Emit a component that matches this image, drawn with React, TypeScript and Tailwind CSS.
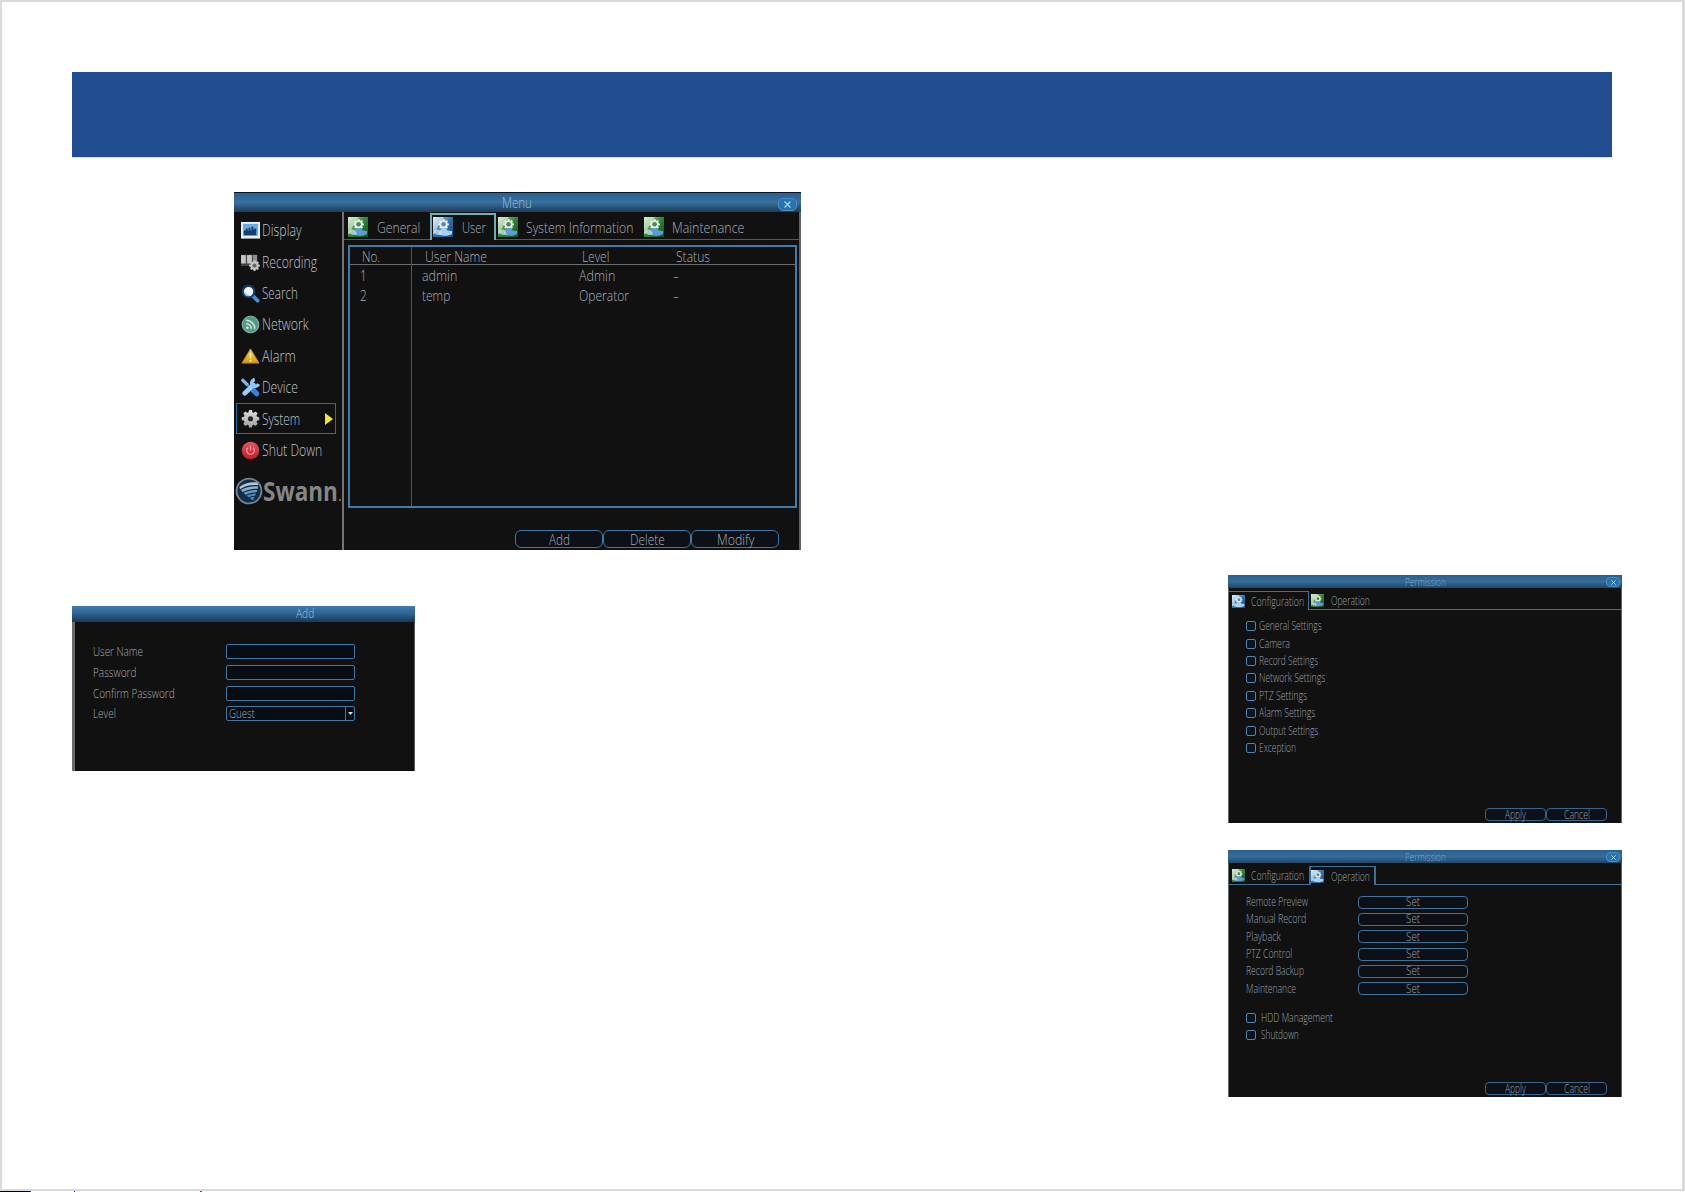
import { useLayoutEffect, useRef, useState } from "react";
import type { ReactNode } from "react";
import clsx from "clsx";

// Squeezes a line of text horizontally so it fills exactly `w` pixels.
const Label = ({
  children,
  className,
  w,
}: Readonly<{ children: string; className?: string; w: number }>) => {
  const ref = useRef<HTMLSpanElement>(null);
  const [scale, setScale] = useState(1);

  useLayoutEffect(() => {
    if (ref.current) {
      setScale(w / ref.current.offsetWidth);
    }
  }, [w]);

  return (
    <span
      className={clsx("inline-block shrink-0 whitespace-nowrap", className)}
      style={{ width: w }}
    >
      <span
        className="inline-block origin-left"
        ref={ref}
        style={{ transform: `scaleX(${scale})` }}
      >
        {children}
      </span>
    </span>
  );
};

const gearPath =
  "M8.400 1h3.200l.4 2.300 1.500.6 1.900-1.300 2.200 2.200-1.300 1.900.6 1.500 2.300.4v3.200l-2.300.4-.6 1.500 1.300 1.900-2.200 2.200-1.900-1.300-1.500.6-.4 2.300H8.400L8 17.100l-1.500-.6-1.900 1.300-2.200-2.200 1.300-1.900-.6-1.500L.8 11.800V8.600l2.300-.4.6-1.500-1.300-1.900 2.200-2.200 1.900 1.300L8 3.300z";

const TabIcon = ({
  active,
  className,
}: Readonly<{ active?: boolean; className: string }>) => (
  <svg
    className={clsx("shrink-0", className)}
    viewBox="0 0 20 20"
  >
    <defs>
      <linearGradient
        id={active ? "tab-on" : "tab-off"}
        x1="0"
        x2="1"
        y1="0"
        y2="1"
      >
        <stop
          offset="0"
          stopColor={active ? "#b3d9f4" : "#a9dfa0"}
        />
        <stop
          offset=".5"
          stopColor={active ? "#2f74b2" : "#2f8439"}
        />
        <stop
          offset="1"
          stopColor={active ? "#1a4880" : "#0f5416"}
        />
      </linearGradient>
    </defs>
    <rect
      fill={active ? "url(#tab-on)" : "url(#tab-off)"}
      height="20"
      width="20"
    />
    <path
      d="M0 0h11L5 9l-3 8H0z"
      fill="#fff"
      opacity=".5"
    />
    <path
      d={gearPath}
      fill="#e6ece2"
      transform="translate(4.800 1.500) scale(.58)"
    />
    <circle
      cx="10.600"
      cy="7.300"
      fill={active ? "#5c86b0" : "#5a7f60"}
      r="2.300"
    />
    <path
      d="M6 17.500c-.5-3.500 2-6.500 5-6.500 2 0 3 1 3.500 2.500l4.500.5v3c-3 2-8.500 2.500-13 .5z"
      fill={active ? "#a5d2f3" : "#5b9bd8"}
    />
    <path
      d="M1 15c2-2.500 4-3 6-2l2 4.500-5 .5z"
      fill="#d7e8ee"
      opacity=".7"
    />
  </svg>
);

const DisplayIcon = () => (
  <svg viewBox="0 0 20 20">
    <rect
      fill="#e4f1fb"
      height="17.500"
      width="20"
      y="1"
    />
    <rect
      fill="#6cabe0"
      height="12.500"
      width="16"
      x="2"
      y="3"
    />
    <path
      d="M3 15v-5h2V8h2v2h1V7h2v3h1V6h2v3h1V8h2v7z"
      fill="#143f70"
    />
  </svg>
);

const RecordingIcon = () => (
  <svg viewBox="0 0 20 20">
    <path
      d="M0 3h17v9H0z"
      fill="#8f8f8f"
    />
    <path
      d="M0 3.500h5V12H0zM6.500 3.500h5V12h-5z"
      fill="#c4c4c4"
    />
    <path
      d="M5.700 3v9M12 3v9"
      stroke="#3c3c3c"
    />
    <path
      d="M0 13h10v1.500H0z"
      fill="#5a5a5a"
    />
    <path
      d={gearPath}
      fill="#c4c4c4"
      transform="translate(8 8) scale(.62)"
    />
    <circle
      cx="14.200"
      cy="14.300"
      fill="#666"
      r="2.200"
    />
  </svg>
);

const SearchIcon = () => (
  <svg viewBox="0 0 20 20">
    <path
      d="M12.500 12.500l5 5"
      stroke="#3d8fdc"
      strokeLinecap="round"
      strokeWidth="4"
    />
    <circle
      cx="8"
      cy="8"
      fill="#edf7ff"
      r="6"
      stroke="#163f6b"
      strokeWidth="2.200"
    />
    <path
      d="M4.500 9c.5 2 2 3 4 3"
      fill="none"
      stroke="#9ccaf0"
      strokeWidth="1.500"
    />
  </svg>
);

const NetworkIcon = () => (
  <svg viewBox="0 0 20 20">
    <circle
      cx="10"
      cy="10"
      fill="#549c89"
      r="8.800"
      stroke="#86bfae"
    />
    <g
      fill="none"
      stroke="#d3ece4"
      strokeWidth="1.600"
    >
      <path d="M5.500 5.500c5 0 9 4 9 9" />
      <path d="M5.500 9.300c3 0 5.200 2.200 5.200 5.200" />
    </g>
    <circle
      cx="6.700"
      cy="13.400"
      fill="#d3ece4"
      r="1.400"
    />
  </svg>
);

const AlarmIcon = () => (
  <svg viewBox="0 0 20 20">
    <defs>
      <linearGradient
        id="alarm"
        x2="0"
        y2="1"
      >
        <stop stopColor="#f7d95c" />
        <stop
          offset="1"
          stopColor="#d69b0e"
        />
      </linearGradient>
    </defs>
    <path
      d="M10 3l9 15H1z"
      fill="url(#alarm)"
      stroke="#b9860f"
      strokeLinejoin="round"
    />
    <path
      d="M10 7.500v5.500M10 14.500v2"
      stroke="#fff4c0"
      strokeWidth="1.600"
    />
  </svg>
);

const DeviceIcon = () => (
  <svg
    fill="none"
    viewBox="0 0 20 20"
  >
    <path
      d="M2 2.500l4.500 4.500"
      stroke="#7db9f0"
      strokeLinecap="round"
      strokeWidth="3.600"
    />
    <path
      d="M7 7l4 4"
      stroke="#4a8fd6"
      strokeWidth="2.500"
    />
    <path
      d="M12 12l4.500 4.500"
      stroke="#3584dc"
      strokeLinecap="round"
      strokeWidth="5.400"
    />
    <path
      d="M4 16L13 7.500"
      stroke="#9cccf8"
      strokeLinecap="round"
      strokeWidth="5"
    />
    <path
      d="M14.500 1.500c-3 .8-4 3.500-2.500 5.800 1.800 2.500 5 2 6.500-1"
      stroke="#8fc5f7"
      strokeWidth="3.600"
    />
  </svg>
);

const SystemIcon = () => (
  <svg viewBox="0 0 20 20">
    <defs>
      <linearGradient
        id="gear"
        x2="0"
        y2="1"
      >
        <stop stopColor="#dedede" />
        <stop
          offset="1"
          stopColor="#a2a2a2"
        />
      </linearGradient>
    </defs>
    <path
      d={gearPath}
      fill="url(#gear)"
    />
    <circle
      cx="10"
      cy="10.200"
      fill="#26262a"
      r="2.700"
    />
  </svg>
);

const ShutDownIcon = () => (
  <svg viewBox="0 0 20 20">
    <defs>
      <linearGradient
        id="power"
        x2="0"
        y2="1"
      >
        <stop stopColor="#e2555e" />
        <stop
          offset="1"
          stopColor="#c21d29"
        />
      </linearGradient>
    </defs>
    <circle
      cx="10"
      cy="10"
      fill="url(#power)"
      r="9.200"
    />
    <path
      d="M7.300 7a4 4 0 1 0 5.400 0M10 5v5"
      fill="none"
      stroke="#f0a0a3"
      strokeWidth="1.300"
    />
  </svg>
);

const menuItems = [
  { label: "Display", icon: <DisplayIcon />, w: 40 },
  { label: "Recording", icon: <RecordingIcon />, w: 55 },
  { label: "Search", icon: <SearchIcon />, w: 36 },
  { label: "Network", icon: <NetworkIcon />, w: 47 },
  { label: "Alarm", icon: <AlarmIcon />, w: 34 },
  { label: "Device", icon: <DeviceIcon />, w: 36 },
  { label: "System", icon: <SystemIcon />, w: 38, active: true },
  { label: "Shut Down", icon: <ShutDownIcon />, w: 60 },
];

const SwannLogo = () => (
  <div className="mt-[11px] flex h-7 items-center pl-px">
    <svg
      className="size-7 shrink-0"
      viewBox="0 0 28 28"
    >
      <circle
        cx="14"
        cy="14"
        fill="#0f2f4c"
        r="12.400"
        stroke="#76828c"
        strokeWidth="1.800"
      />
      <path
        d="M4.500 10c4-3.500 11-5.200 18-4.500l.8 2.700C16 7.500 9.500 9 5 12.200z"
        fill="#b4c6cf"
      />
      <path
        d="M6 13c4-2.500 10.500-4 17-3.600l-.3 2.400C17 11.600 11.500 12.800 7.500 15z"
        fill="#8fb3c8"
      />
      <path
        d="M8.500 16c3.500-1.800 8.500-3 13.700-3l-.7 2.300c-4 .1-8 1-11 2.500z"
        fill="#6b9fc0"
      />
      <path
        d="M11.500 18.600c2.700-1.200 6-2 9.500-2.100l-1 2.200c-2.400.1-4.800.7-6.700 1.500zM14.500 21c1.500-.6 3.200-1 5-1.100l-1.500 3.300z"
        fill="#4c8ab5"
      />
    </svg>
    <Label
      className="text-[27px] leading-7 font-bold text-[#868686]"
      w={75}
    >
      Swann
    </Label>
    <span className="mt-[18px] ml-px size-0.5 bg-[#6c6c6c]" />
  </div>
);

const Sidebar = () => (
  <div className="w-[110px] shrink-0 border-r-2 border-[#747474] pt-[2.600px]">
    {menuItems.map((item) => (
      <div
        className={clsx(
          "ml-[2px] flex h-[31.400px] w-[100px] items-center border pl-[4px] text-[15.500px]",
          item.active ? "border-[#2f6a99]" : "border-transparent",
        )}
        key={item.label}
      >
        <span className="w-[19px] shrink-0">{item.icon}</span>
        <Label
          className="ml-0.5 pt-px text-[#bcc2ca]"
          w={item.w}
        >
          {item.label}
        </Label>
        {item.active ? (
          <svg
            className="mr-[2px] ml-auto h-3 w-2"
            viewBox="0 0 8 12"
          >
            <path
              d="M0 0l8 6-8 6z"
              fill="#f3e52c"
            />
          </svg>
        ) : null}
      </div>
    ))}
    <SwannLogo />
  </div>
);

const CloseButton = ({ small }: Readonly<{ small?: boolean }>) => (
  <span
    className={clsx(
      "absolute flex items-center justify-center border border-[#4690c8] bg-[#2873ad]",
      small
        ? "top-[2px] right-[2px] h-[10px] w-[14px] rounded-[4px]"
        : "top-[5px] right-[4px] h-[13px] w-[19px] rounded-[5px]",
    )}
  >
    <svg
      className={small ? "size-[5px]" : "size-[7px]"}
      viewBox="0 0 7 7"
    >
      <path
        d="M.5.5l6 6M6.500.5l-6 6"
        stroke="#a5d3f2"
        strokeWidth="1.400"
      />
    </svg>
  </span>
);

const SmallButton = ({
  children,
  className,
  w,
}: Readonly<{ children: string; className: string; w: number }>) => (
  <div
    className={clsx(
      "flex items-center justify-center border bg-[#0d1117]",
      className,
    )}
  >
    <Label w={w}>{children}</Label>
  </div>
);

const users = [
  { no: "1", name: "admin", nameW: 35, level: "Admin", levelW: 36 },
  { no: "2", name: "temp", nameW: 28, level: "Operator", levelW: 50 },
];

const MenuWindow = () => (
  <section className="ml-[162px] flex h-[358px] w-[567px] flex-col bg-[#111] text-[15px] text-[#a4afba]">
    <div className="relative h-5 shrink-0 border-t border-[#081421] bg-linear-to-b from-[#2a618f] via-[#386f9f] to-[#1c3d58] pl-[268px] leading-[19px] text-[#9dbfd8]">
      <Label w={30}>Menu</Label>
      <CloseButton />
    </div>
    <div className="flex flex-1">
      <Sidebar />
      <div className="flex flex-1 flex-col border-r-2 border-[#606468]">
        <div className="flex h-7 shrink-0">
          <div className="flex w-[86px] items-center border-b border-[#2d6489] pt-[3px] pl-1">
            <TabIcon className="size-5" />
            <Label
              className="ml-[9px]"
              w={43}
            >
              General
            </Label>
          </div>
          <div className="mt-px flex w-[66px] items-center border-2 border-b-0 border-[#6fb0b5] pl-px">
            <TabIcon
              active
              className="mb-px size-5"
            />
            <Label
              className="ml-[9px]"
              w={24}
            >
              User
            </Label>
          </div>
          <div className="flex flex-1 items-center border-b border-[#2d6489] pt-[3px] pl-[2px]">
            <TabIcon className="size-5" />
            <Label
              className="ml-[8px]"
              w={107}
            >
              System Information
            </Label>
            <TabIcon className="ml-[11px] size-5" />
            <Label
              className="ml-2"
              w={72}
            >
              Maintenance
            </Label>
          </div>
        </div>
        <div className="mt-[5px] ml-[4px] flex h-[263px] w-[449px] border-2 border-[#3f7cac]">
          <div className="w-[62px] border-r border-[#4e5458]">
            <div className="h-[18px] border-b border-[#6a6f73] pl-3 leading-[18px]">
              <Label w={18}>No.</Label>
            </div>
            {users.map((user) => (
              <div
                className="h-5 pl-[10px] leading-5"
                key={user.no}
              >
                <Label w={7}>{user.no}</Label>
              </div>
            ))}
          </div>
          <div className="flex-1">
            <div className="flex h-[18px] border-b border-[#6a6f73] pl-[13px] leading-[18px]">
              <Label
                className="mr-[95px]"
                w={62}
              >
                User Name
              </Label>
              <Label
                className="mr-[67px]"
                w={27}
              >
                Level
              </Label>
              <Label w={34}>Status</Label>
            </div>
            {users.map((user) => (
              <div
                className="grid h-5 grid-cols-[157px_94px_1fr] pl-[10px] leading-5"
                key={user.no}
              >
                <Label w={user.nameW}>{user.name}</Label>
                <Label w={user.levelW}>{user.level}</Label>
                <Label w={6}>-</Label>
              </div>
            ))}
          </div>
        </div>
        <div className="mt-[22px] ml-[171px] flex h-[18px]">
          <SmallButton
            className="w-[88px] rounded-md border-[#3b79a8]"
            w={21}
          >
            Add
          </SmallButton>
          <SmallButton
            className="w-[88px] rounded-md border-[#3b79a8]"
            w={35}
          >
            Delete
          </SmallButton>
          <SmallButton
            className="w-[88px] rounded-md border-[#3b79a8]"
            w={37}
          >
            Modify
          </SmallButton>
        </div>
      </div>
    </div>
  </section>
);

const addFields = [
  { label: "User Name", w: 50 },
  { label: "Password", w: 43 },
  { label: "Confirm Password", w: 82 },
  { label: "Level", w: 23, value: "Guest" },
];

const AddWindow = () => (
  <section className="mt-14 h-[165px] w-[343px] bg-[#111] text-[13px] text-[#a4acb4]">
    <div className="h-4 bg-linear-to-b from-[#3f7cb0] via-[#2c628f] to-[#193a56] pl-[224px] leading-[15px] text-[#9dbfd8]">
      <Label w={18}>Add</Label>
    </div>
    <div className="h-[149px] border-r border-l-[3px] border-r-[#555] border-l-[#6b6b6b] pt-[19px] pl-[18px]">
      {addFields.map((field) => (
        <div
          className="flex h-[20.700px] items-center"
          key={field.label}
        >
          <div className="w-[133px] leading-4">
            <Label w={field.w}>{field.label}</Label>
          </div>
          <div className="mt-px flex h-[15px] w-[129px] items-center rounded-xs border border-[#3b79a8] bg-[#080d14] pl-[2px]">
            {field.value ? (
              <>
                <Label w={26}>{field.value}</Label>
                <span className="ml-auto flex h-full w-[9px] items-center justify-center border-l border-[#3b79a8]">
                  <svg
                    className="h-[3px] w-[5px]"
                    viewBox="0 0 5 3"
                  >
                    <path
                      d="M0 0h5L2.500 3z"
                      fill="#ddd"
                    />
                  </svg>
                </span>
              </>
            ) : null}
          </div>
        </div>
      ))}
    </div>
  </section>
);

const PermissionWindow = ({
  children,
  tab,
}: Readonly<{ children: ReactNode; tab: "configuration" | "operation" }>) => {
  const first = tab === "configuration";

  return (
    <section
      className={clsx(
        "flex w-[394px] flex-col bg-[#111] text-[12px] text-[#98a2ac]",
        first ? "h-[248px]" : "h-[247px]",
      )}
    >
      <div className="relative h-[13px] shrink-0 bg-linear-to-b from-[#28608f] via-[#356c9a] to-[#204766] pl-[177px] text-[11px] leading-[13px] text-[#7fa9c9]">
        <Label w={41}>Permission</Label>
        <CloseButton small />
      </div>
      <div className="flex flex-1 flex-col border-x border-[#63676b]">
        <div className="mt-[3px] flex h-[19px] shrink-0">
          <div
            className={clsx(
              "flex w-[80px] items-center border-[#3c7197] pl-[3px]",
              first ? "border-t border-r" : "border-b",
            )}
          >
            <TabIcon
              active={first}
              className="size-[13px]"
            />
            <Label
              className="mt-px ml-[6px]"
              w={53}
            >
              Configuration
            </Label>
          </div>
          <div
            className={clsx(
              "flex w-[67px] items-center border-[#3c7197]",
              first ? "border-b pl-[2px]" : "border-x-2 border-t",
            )}
          >
            <TabIcon
              active={!first}
              className="size-[13px]"
            />
            <Label
              className="mt-px ml-[7px]"
              w={39}
            >
              Operation
            </Label>
          </div>
          <div className="flex-1 border-b border-[#3c7197]" />
        </div>
        <div className="flex-1 pl-[17px]">{children}</div>
        <div className="mr-[14px] mb-[2px] flex h-[13px] justify-end">
          <SmallButton
            className="w-[61px] rounded-[4px] border-[#33678f]"
            w={21}
          >
            Apply
          </SmallButton>
          <SmallButton
            className="w-[61px] rounded-[4px] border-[#33678f]"
            w={26}
          >
            Cancel
          </SmallButton>
        </div>
      </div>
    </section>
  );
};

const CheckRow = ({
  gap = "ml-[3px]",
  label,
  w,
}: Readonly<{ gap?: string; label: string; w: number }>) => (
  <div className="flex h-[17.400px] items-center">
    <span className="size-[10px] rounded-[2px] border border-[#4d86b0] bg-[#071422]" />
    <Label
      className={gap}
      w={w}
    >
      {label}
    </Label>
  </div>
);

const configurationItems = [
  { label: "General Settings", w: 63 },
  { label: "Camera", w: 31 },
  { label: "Record Settings", w: 59 },
  { label: "Network Settings", w: 66 },
  { label: "PTZ Settings", w: 48 },
  { label: "Alarm Settings", w: 56 },
  { label: "Output Settings", w: 59 },
  { label: "Exception", w: 37 },
];

const operationItems = [
  { label: "Remote Preview", w: 62 },
  { label: "Manual Record", w: 60 },
  { label: "Playback", w: 35 },
  { label: "PTZ Control", w: 46 },
  { label: "Record Backup", w: 58 },
  { label: "Maintenance", w: 50 },
];

export default function App() {
  return (
    <div className="flex h-[1192px] w-[1685px] flex-col bg-white font-['Open_Sans','Noto_Sans',sans-serif] font-light">
      <main className="flex-1 border-2 border-r-[3px] border-[#dadada] pt-[70px] pl-[70px]">
        <div className="h-[86px] w-[1540px] border-b border-[#d5dfec] bg-[#204e90]" />
        <div className="flex w-[1550px] justify-between">
          <div className="pt-[34px]">
            <MenuWindow />
            <AddWindow />
          </div>
          <div className="flex flex-col gap-[27px] pt-[417px]">
            <PermissionWindow tab="configuration">
              <div className="pt-[7.500px]">
                {configurationItems.map((item) => (
                  <CheckRow
                    key={item.label}
                    label={item.label}
                    w={item.w}
                  />
                ))}
              </div>
            </PermissionWindow>
            <PermissionWindow tab="operation">
              <div className="pt-[8.500px]">
                {operationItems.map((item) => (
                  <div
                    className="flex h-[17.300px] items-center"
                    key={item.label}
                  >
                    <div className="w-[112px]">
                      <Label w={item.w}>{item.label}</Label>
                    </div>
                    <SmallButton
                      className="h-[13px] w-[110px] rounded-[4px] border-[#3b749f]"
                      w={14}
                    >
                      Set
                    </SmallButton>
                  </div>
                ))}
              </div>
              <div className="mt-3">
                <CheckRow
                  gap="ml-[5px]"
                  label="HDD Management"
                  w={72}
                />
                <CheckRow
                  gap="ml-[5px]"
                  label="Shutdown"
                  w={38}
                />
              </div>
            </PermissionWindow>
          </div>
        </div>
      </main>
      <div className="flex h-px shrink-0">
        <span className="w-[30px] bg-black" />
        <span className="w-px bg-[#2018a8]" />
        <span className="ml-[43px] w-px bg-[#2018a8]" />
        <span className="ml-[125px] w-[2px] bg-[#705058]" />
      </div>
    </div>
  );
}
